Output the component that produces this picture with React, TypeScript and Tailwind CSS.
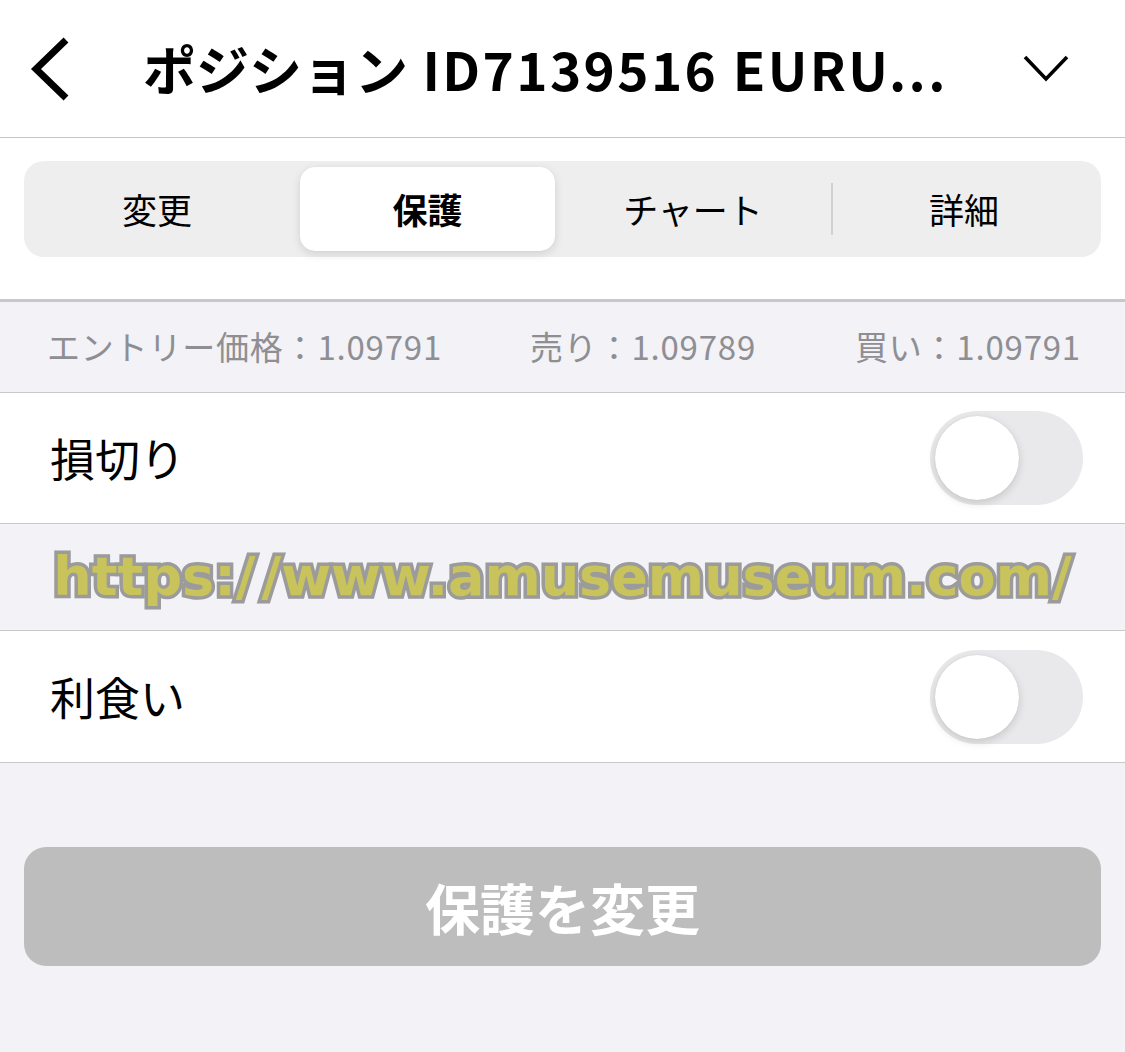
import React from "react";

const jp = { fontFamily: '"Noto Sans CJK JP", "Noto Sans", sans-serif' };

function Toggle() {
  return (
    <div className="w-[153px] h-[94px] rounded-full bg-[#e9e9eb] p-[5px] flex items-center">
      <div className="w-[84px] h-[84px] rounded-full bg-white shadow-[0_3px_8px_rgba(0,0,0,0.15),0_0_1px_rgba(0,0,0,0.12)]" />
    </div>
  );
}

export default function App() {
  return (
    <div className="w-[1125px] h-[1052px] bg-[#f2f2f7] flex flex-col" style={jp}>
      {/* Header */}
      <div className="h-[138px] shrink-0 bg-white border-b-[1.5px] border-[#c6c6c8] flex items-center px-[28px]">
        <svg width="44" height="66" viewBox="0 0 44 66" className="shrink-0">
          <path d="M38 4 L8 33 L38 62" fill="none" stroke="#000" strokeWidth="7" strokeLinecap="butt" strokeLinejoin="miter" />
        </svg>
        <div className="ml-[71px] text-[53px] font-bold text-black leading-none whitespace-nowrap">
          <span>ポジション</span>
          <span className="tracking-[2.4px]"> ID7139516 EURU...</span>
        </div>
        <div className="flex-1" />
        <svg width="46" height="30" viewBox="0 0 46 30" className="shrink-0 mr-[28px]">
          <path d="M2 3 L23 25 L44 3" fill="none" stroke="#000" strokeWidth="3.6" />
        </svg>
      </div>

      {/* Segmented control */}
      <div className="h-[164px] shrink-0 bg-white flex items-start pt-[23px] px-[24px] border-b-[3px] border-[#c8c8cc]">
        <div className="w-full h-[96px] rounded-[20px] bg-[#eeeeef] flex items-center px-[6px] text-[35px] text-black">
          <div className="w-[270px] h-[84px] flex items-center justify-center pr-[16px]">変更</div>
          <div className="w-[255px] h-[84px] rounded-[15px] bg-white shadow-[0_3px_10px_rgba(0,0,0,0.12),0_0_1px_rgba(0,0,0,0.08)] flex items-center justify-center font-bold">
            保護
          </div>
          <div className="w-[276px] h-[84px] flex items-center justify-center">チャート</div>
          <div className="w-[2px] h-[52px] bg-[#d1d1d4]" />
          <div className="flex-1 h-[84px] flex items-center justify-center">詳細</div>
        </div>
      </div>

      {/* Info */}
      <div className="h-[91px] shrink-0 border-b border-[#c8c7cc] flex items-center pl-[47px] pr-[44px] text-[33px] text-[#8e8e93] whitespace-nowrap">
        <div className="w-[483px] tracking-[0.8px]">エントリー価格：1.09791</div>
        <div className="tracking-[0.8px]">売り：1.09789</div>
        <div className="flex-1" />
        <div className="tracking-[0.8px]">買い：1.09791</div>
      </div>

      {/* 損切り */}
      <div className="h-[131px] shrink-0 bg-white border-b border-[#c8c7cc] flex items-center pl-[50px] pr-[42px]">
        <div className="text-[45px] text-black">損切り</div>
        <div className="flex-1" />
        <Toggle />
      </div>

      {/* watermark row */}
      <div className="h-[107px] shrink-0 border-b border-[#c8c7cc] flex items-center justify-center">
        <div
          className="text-[54px] font-bold text-[#c9c35c] leading-none whitespace-nowrap [-webkit-text-stroke:7px_#9b9b9b] [paint-order:stroke_fill]"
          style={{ fontFamily: '"DejaVu Sans", Verdana, sans-serif' }}
        >
          https:/<span className="ml-[6px]">/www.amusemuseum.com/</span>
        </div>
      </div>

      {/* 利食い */}
      <div className="h-[132px] shrink-0 bg-white border-b border-[#c8c7cc] flex items-center pl-[50px] pr-[42px]">
        <div className="text-[45px] text-black">利食い</div>
        <div className="flex-1" />
        <Toggle />
      </div>

      {/* Button */}
      <div className="px-[24px] pt-[84px]">
        <div className="h-[119px] rounded-[22px] bg-[#bdbdbd] flex items-center justify-center text-[55px] font-bold text-white">
          保護を変更
        </div>
      </div>
    </div>
  );
}
